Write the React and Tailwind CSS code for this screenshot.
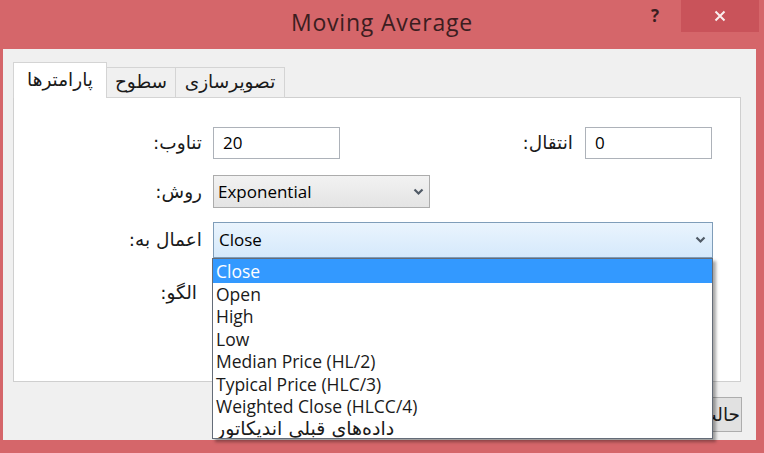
import React from "react";

const latin = { fontFamily: '"Open Sans", "Noto Sans", sans-serif' };
const fa = { fontFamily: '"DejaVu Sans", "Noto Sans", sans-serif' };

function Chevron({ className = "" }) {
  return (
    <svg width="11" height="8" viewBox="0 0 11 8" className={className}>
      <polyline points="1.5,1.5 5.5,5.5 9.5,1.5" fill="none" stroke="#505a66" strokeWidth="2.2" />
    </svg>
  );
}

const items = [
  "Open",
  "High",
  "Low",
  "Median Price (HL/2)",
  "Typical Price (HLC/3)",
  "Weighted Close (HLCC/4)",
];

function Label({ w, children, extra = "" }) {
  return (
    <div className={`${w} ${extra} text-right text-[18.5px] leading-[24px] text-[#1a1a1a]`} style={fa}>
      {children}
    </div>
  );
}

export default function App() {
  return (
    <div className="w-[764px] h-[453px] bg-[#d5666a] flex flex-col overflow-hidden">
      {/* title bar */}
      <div className="h-[49px] grid grid-cols-[1fr_auto_1fr] items-start shrink-0">
        <div />
        <div className="pt-[7px] text-[23px] tracking-[0.8px] text-[#3b1d1f] leading-[30px]" style={latin}>
          Moving Average
        </div>
        <div className="flex justify-end">
          <div className="w-[52px] h-[32px] flex items-center justify-center text-[17px] font-bold text-[#3b1d1f]" style={latin}>
            ?
          </div>
          <div className="w-[78px] h-[32px] mr-[5px] bg-[#c9535a] flex items-center justify-center">
            <svg width="12" height="12" viewBox="0 0 12 12">
              <path d="M1.5 1.5 L10.5 10.5 M10.5 1.5 L1.5 10.5" stroke="#fbeeee" strokeWidth="2" />
            </svg>
          </div>
        </div>
      </div>

      {/* client area */}
      <div className="ml-[3px] mr-[8px] h-[391px] bg-[#f0f0f0] pt-[13px] pl-[10px] shrink-0">
        {/* tabs */}
        <div className="flex items-end h-[36px]">
          <div
            className="relative z-10 w-[94px] h-[36px] bg-white border border-b-0 border-[#d4d4d4] flex items-start justify-center pt-[5px] text-[18.5px] leading-[24px] text-[#1a1a1a]"
            style={fa}
          >
            <span dir="rtl">پارامترها</span>
          </div>
          <div
            className="-ml-px w-[70px] h-[31px] bg-[#f0f0f0] border border-[#d4d4d4] flex items-start justify-center pt-[2px] text-[18.5px] leading-[24px] text-[#1a1a1a]"
            style={fa}
          >
            <span dir="rtl">سطوح</span>
          </div>
          <div
            className="-ml-px w-[110px] h-[31px] bg-[#f0f0f0] border border-[#d4d4d4] flex items-start justify-center pt-[2px] text-[18.5px] leading-[24px] text-[#1a1a1a]"
            style={fa}
          >
            <span dir="rtl">تصویرسازی</span>
          </div>
        </div>

        {/* panel */}
        <div className="-mt-px w-[728px] h-[285px] bg-white border border-[#cfcfcf] pt-[29px]">
          {/* row 1 */}
          <div className="flex items-center h-[32px]">
            <Label w="w-[191px]" extra="pr-[3px]">:تناوب</Label>
            <div className="ml-[8px] w-[127px] h-[32px] border border-[#adb2b9] bg-white flex items-center pl-[9px] text-[17px] text-black" style={latin}>
              20
            </div>
            <Label w="w-[233px]">:انتقال</Label>
            <div className="ml-[12px] w-[127px] h-[32px] border border-[#adb2b9] bg-white flex items-center pl-[9px] text-[17px] text-black" style={latin}>
              0
            </div>
          </div>

          {/* row 2 */}
          <div className="flex items-center h-[33px] mt-[16px]">
            <Label w="w-[191px]" extra="pr-[3px]">:روش</Label>
            <div className="ml-[8px] w-[217px] h-[33px] border border-[#acacac] bg-gradient-to-b from-[#f2f2f2] to-[#e4e4e4] flex items-center justify-between pl-[4px] pr-[5px] text-[17px] text-black" style={latin}>
              <span>Exponential</span>
              <Chevron />
            </div>
          </div>

          {/* row 3 */}
          <div className="flex items-center h-[36px] mt-[14px]">
            <Label w="w-[191px]" extra="pr-[3px]">:اعمال به</Label>
            <div className="relative ml-[8px] w-[500px] h-[36px]">
              <div className="w-full h-full border border-[#7f9db9] bg-gradient-to-b from-[#eaf4fd] to-[#d5e9fb] flex items-center justify-between pl-[5px] pr-[6px] text-[17px] text-black" style={latin}>
                <span>Close</span>
                <Chevron />
              </div>
              {/* open list */}
              <div
                className="absolute z-20 top-full left-[-1px] w-[501px] h-[181px] bg-white border border-[#646c78] overflow-hidden shadow-[3px_3px_3px_rgba(0,0,0,0.35)] text-[17.5px] text-[#1a1a1a]"
                style={latin}
              >
                <div className="h-[24px] leading-[24px] bg-[#3399ff] text-white pl-[3px]">Close</div>
                {items.map((t) => (
                  <div key={t} className="h-[22.4px] leading-[22.4px] pl-[3px]">
                    {t}
                  </div>
                ))}
                <div className="h-[22.4px] leading-[22.4px] pl-[3px] text-[19px]" style={fa}>
                  <span dir="rtl">داده‌های قبلی اندیکاتور</span>
                </div>
              </div>
            </div>
          </div>

          {/* row 4 */}
          <div className="flex items-center h-[30px] mt-[20px]">
            <Label w="w-[191px]" extra="pr-[8px]">:الگو</Label>
          </div>
        </div>

        {/* bottom buttons */}
        <div className="w-[729px] flex justify-end mt-[15px]">
          <div
            className="w-[150px] h-[35px] bg-[#e1e1e1] border border-[#adadad] flex items-center justify-end pr-[1px] overflow-hidden whitespace-nowrap text-[18.5px] text-[#1a1a1a]"
            style={fa}
          >
            <span dir="rtl">حالت پیش‌فرض</span>
          </div>
        </div>
      </div>
    </div>
  );
}
